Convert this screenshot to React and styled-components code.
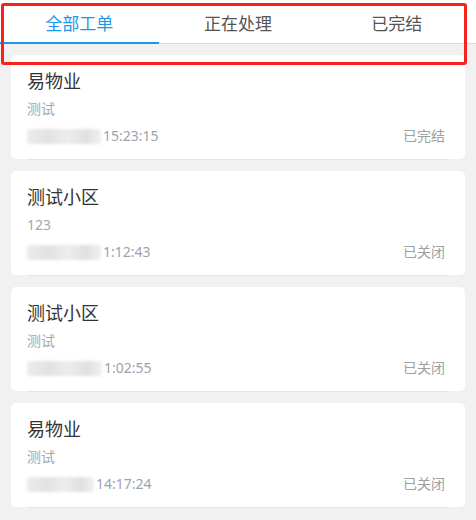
import React, { useState } from "react";
import styled, { createGlobalStyle } from "styled-components";

const GlobalStyle = createGlobalStyle`
  body {
    margin: 0;
    background: #f1f1f1;
    font-family: "Noto Sans", "Noto Sans CJK SC", sans-serif;
  }
`;

const Page = styled.div`
  position: relative;
  width: 476px;
  min-height: 520px;
  background: #f1f1f1;
`;

const TabBar = styled.div`
  display: grid;
  grid-template-columns: repeat(3, 1fr);
  height: 44px;
  box-sizing: border-box;
  background: #fff;
  border-bottom: 1px solid #d9d9d9;
`;

const Tab = styled.div`
  display: flex;
  justify-content: center;
  align-items: center;
  height: 44px;
  box-sizing: border-box;
  padding-top: 2px;
  font-size: 17px;
  color: ${(props) => (props.active ? "#1c98ea" : "#555")};
  border-bottom: 2px solid ${(props) => (props.active ? "#1c98ea" : "transparent")};
  cursor: pointer;
`;

// annotation frame drawn over the tab bar
const Highlight = styled.div`
  position: absolute;
  left: 1px;
  top: 3px;
  width: 466px;
  height: 62px;
  box-sizing: border-box;
  border: 3px solid #f4231b;
  border-radius: 3px;
  pointer-events: none;
`;

const List = styled.div`
  display: flex;
  flex-direction: column;
  gap: 12px;
  padding: 11px 11px 12px;
`;

const Card = styled.div`
  background: #fff;
  border-radius: 5px;
  padding: 13px 20px 13px 16px;
  box-shadow: 0 18px 0 -17px #e4e4e4;
`;

const Title = styled.div`
  font-size: 18px;
  line-height: 26px;
  color: #333;
`;

const Sub = styled.div`
  margin-top: 5px;
  font-size: 14px;
  line-height: 20px;
  color: #a3a7b0;
`;

const Bottom = styled.div`
  display: flex;
  justify-content: space-between;
  align-items: center;
  margin-top: 7px;
  font-size: 14px;
  line-height: 20px;
  color: #9ea2ab;
`;

const Time = styled.div`
  display: flex;
  align-items: center;
`;

const Masked = styled.span`
  display: inline-block;
  width: ${(props) => props.w}px;
  height: 15px;
  margin-right: 2px;
  border-radius: 3px;
  background: linear-gradient(
    90deg,
    #ebebeb 0%,
    #e2e2e2 30%,
    #ededed 55%,
    #e0e0e0 80%,
    #f0f0f0 100%
  );
  filter: blur(1.5px);
`;

const Status = styled.span`
  color: #a0a0a0;
`;

const tabs = ["全部工单", "正在处理", "已完结"];

const orders = [
  { title: "易物业", sub: "测试", mask: 74, time: "15:23:15", status: "已完结" },
  { title: "测试小区", sub: "123", mask: 74, time: "1:12:43", status: "已关闭" },
  { title: "测试小区", sub: "测试", mask: 75, time: "1:02:55", status: "已关闭" },
  { title: "易物业", sub: "测试", mask: 67, time: "14:17:24", status: "已关闭" },
];

function App() {
  const [active, setActive] = useState(0);

  return (
    <Page>
      <GlobalStyle />
      <TabBar>
        {tabs.map((t, i) => (
          <Tab key={t} active={i === active ? 1 : 0} onClick={() => setActive(i)}>
            {t}
          </Tab>
        ))}
      </TabBar>
      <List>
        {orders.map((o, i) => (
          <Card key={i}>
            <Title>{o.title}</Title>
            <Sub>{o.sub}</Sub>
            <Bottom>
              <Time>
                <Masked w={o.mask} />
                {o.time}
              </Time>
              <Status>{o.status}</Status>
            </Bottom>
          </Card>
        ))}
      </List>
      <Highlight />
    </Page>
  );
}

export default App;
